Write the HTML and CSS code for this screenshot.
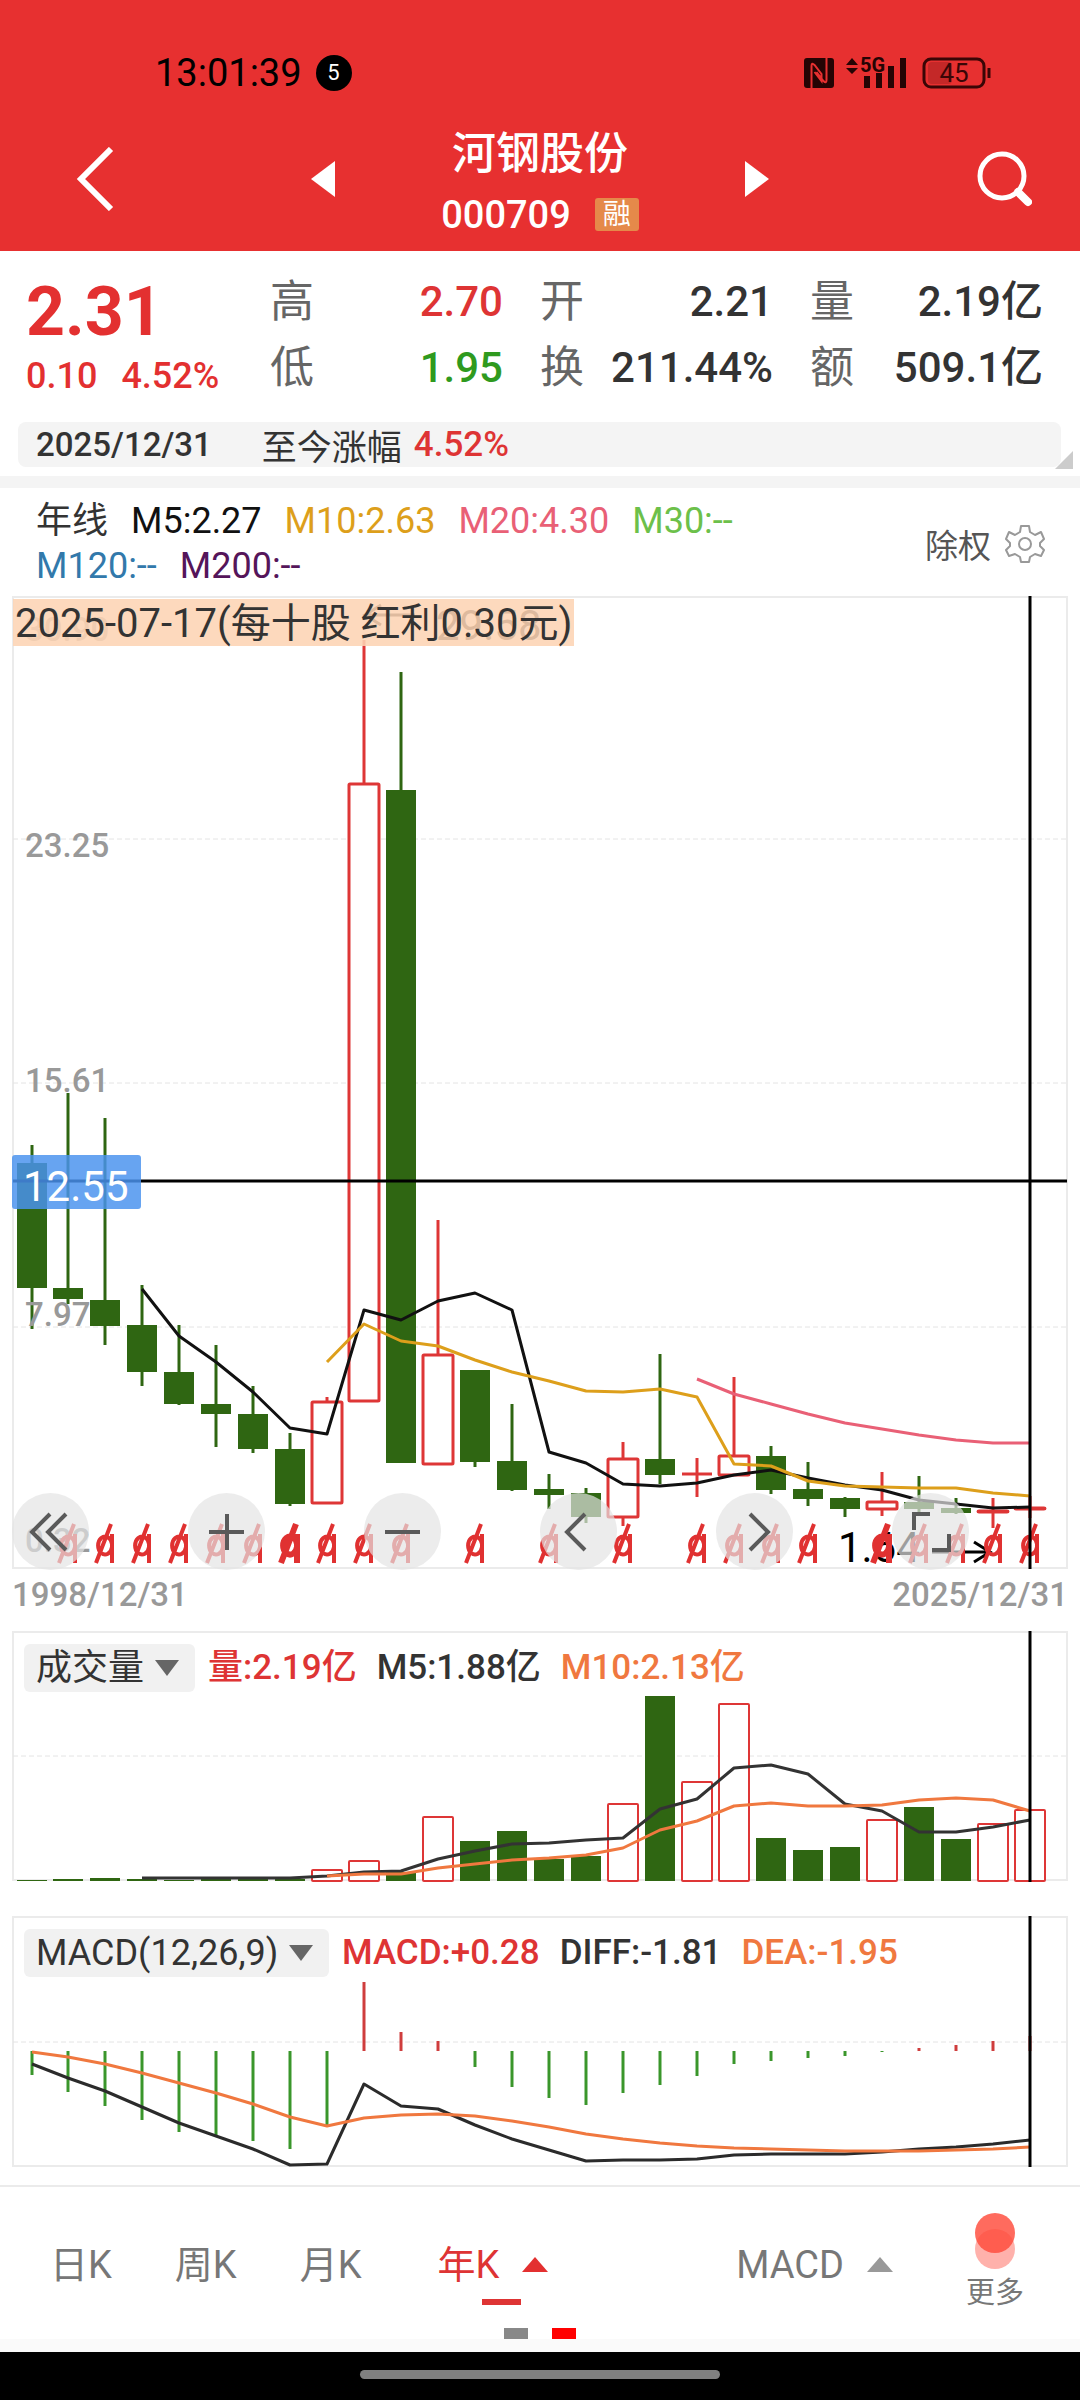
FILE: index.html
```html
<!DOCTYPE html>
<html lang="zh-CN">

<head>
    <meta charset="UTF-8">
    <meta name="viewport" content="width=device-width, initial-scale=1.0">
    <title>河钢股份 000709</title>
    <link rel="stylesheet" href="styles.css">
</head>

<body>
    <header class="top">
        <div class="status-bar">
            <div class="status-left">
                <span class="clock">13:01:39</span>
                <span class="notice">5</span>
            </div>
            <svg class="status-icons" width="188" height="36" viewBox="0 0 188 36">
                <rect x="1" y="3" width="30" height="30" rx="3" fill="#250404" />
                <path d="M8.500 33V11q0-4 3-1l7 9v7l-7-9M23.500 3v22q0 4-3 1l-7-9" fill="none" stroke="#e73030" stroke-width="2" />
                <path d="M43 10l6-7 6 7zM43 13h12l-6 6z" fill="#250404" />
                <text class="net" x="57" y="17">5G</text>
                <path d="M61 21h6v12h-6zM73 18h6v15h-6zM85 11h6v22h-6zM97 3h6v30h-6z" fill="#250404" />
                <rect x="125" y="7" width="24" height="22" rx="4" fill="#c42828" />
                <rect x="121" y="4" width="60" height="28" rx="7" fill="none" stroke="#3a0606" stroke-width="3" />
                <path d="M186 13v10" stroke="#3a0606" stroke-width="3" />
                <text class="battery" x="151" y="27">45</text>
            </svg>
        </div>
        <nav class="title-bar">
            <button class="icon-btn back" type="button" aria-label="返回">
                <svg width="38" height="64" viewBox="0 0 38 64"><path d="M35 2L5 32l30 30" fill="none" stroke="#fff" stroke-width="6" /></svg>
            </button>
            <div class="stock">
                <button class="icon-btn" type="button" aria-label="上一只">
                    <svg width="24" height="36" viewBox="0 0 24 36"><path d="M24 0v36L0 18z" fill="#fff" /></svg>
                </button>
                <div class="stock-name">
                    <h1>河钢股份</h1>
                    <p><span>000709</span><span class="tag">融</span></p>
                </div>
                <button class="icon-btn" type="button" aria-label="下一只">
                    <svg width="24" height="36" viewBox="0 0 24 36"><path d="M0 0v36l24-18z" fill="#fff" /></svg>
                </button>
            </div>
            <button class="icon-btn search" type="button" aria-label="搜索">
                <svg width="56" height="56" viewBox="0 0 56 56">
                    <circle cx="26" cy="25" r="22" fill="none" stroke="#fff" stroke-width="5" />
                    <path d="M42 41l10 10" stroke="#fff" stroke-width="8" stroke-linecap="round" />
                </svg>
            </button>
        </nav>
    </header>

    <section class="quote">
        <div class="price">
            <strong>2.31</strong>
            <p><span>0.10</span><span>4.52%</span></p>
        </div>
        <dl class="stats">
            <div><dt>高</dt><dd class="up">2.70</dd></div>
            <div><dt>开</dt><dd>2.21</dd></div>
            <div><dt>量</dt><dd>2.19亿</dd></div>
            <div><dt>低</dt><dd class="down">1.95</dd></div>
            <div><dt>换</dt><dd>211.44%</dd></div>
            <div><dt>额</dt><dd>509.1亿</dd></div>
        </dl>
    </section>

    <div class="strip">
        <span class="strip-date">2025/12/31</span>
        <span class="strip-label">至今涨幅</span>
        <span class="strip-value">4.52%</span>
    </div>

    <div class="legend-row">
        <div class="legend">
            <span>年线</span>
            <span class="c-m5">M5:2.27</span>
            <span class="c-m10">M10:2.63</span>
            <span class="c-m20">M20:4.30</span>
            <span class="c-m30">M30:--</span>
            <span class="c-m120">M120:--</span>
            <span class="c-m200">M200:--</span>
        </div>
        <button class="adjust" type="button">除权
            <svg width="40" height="40" viewBox="0 0 40 40" fill="none" stroke="#999" stroke-width="2">
                <path stroke-linejoin="round" d="M16 2h8l1 6 5 3 6-3 3 7-4 4v3l4 4-3 6-6-2-5 3-1 5h-8l-1-5-5-3-6 2-3-6 4-4v-3l-4-4 3-7 6 3 5-3z" />
                <circle cx="20" cy="20" r="6" />
            </svg>
        </button>
    </div>

    <main class="charts">
        <section class="panel">
            <svg id="kline" viewBox="12 596 1056 973"></svg>
            <p class="dividend">2025-07-17(每十股 红利0.30元)</p>
            <div class="tools">
                <button type="button" aria-label="最早"><svg viewBox="0 0 77 77"><path d="M38 21L20 39l18 18M54 21L36 39l18 18" /></svg></button>
                <button type="button" aria-label="放大"><svg viewBox="0 0 77 77"><path d="M21 39h35M39 21v36" /></svg></button>
                <button type="button" aria-label="缩小"><svg viewBox="0 0 77 77"><path d="M21 39h35" /></svg></button>
                <button type="button" aria-label="左移"><svg viewBox="0 0 77 77"><path d="M45 21L27 39l18 18" /></svg></button>
                <button type="button" aria-label="右移"><svg viewBox="0 0 77 77"><path d="M34 21l18 18-18 18" /></svg></button>
                <button type="button" aria-label="全屏"><svg viewBox="0 0 77 77"><path d="M22 37V21h16M40 57h17V41" /></svg></button>
            </div>
        </section>
        <div class="dates"><span>1998/12/31</span><span>2025/12/31</span></div>

        <section class="panel">
            <svg id="volume" viewBox="12 1631 1056 251"></svg>
            <div class="panel-head">
                <label class="picker"><select aria-label="指标"><option>成交量</option></select></label>
                <span class="up">量:2.19亿</span>
                <span>M5:1.88亿</span>
                <span class="c-orange">M10:2.13亿</span>
            </div>
        </section>

        <section class="panel">
            <svg id="macd" viewBox="12 1916 1056 251"></svg>
            <div class="panel-head">
                <label class="picker"><select aria-label="指标"><option>MACD(12,26,9)</option></select></label>
                <span class="up">MACD:+0.28</span>
                <span>DIFF:-1.81</span>
                <span class="c-orange">DEA:-1.95</span>
            </div>
        </section>
    </main>

    <footer class="bottom">
        <nav class="tabs">
            <button type="button">日K</button>
            <button type="button">周K</button>
            <button type="button">月K</button>
            <button class="active" type="button">年K<i class="caret"></i></button>
            <button class="indicator" type="button">MACD<i class="caret"></i></button>
            <button class="more" type="button">
                <svg width="40" height="56" viewBox="0 0 40 56">
                    <circle cx="20" cy="36" r="20" fill="#ff5244" fill-opacity=".45" />
                    <circle cx="20" cy="20" r="20" fill="#ff4a3a" fill-opacity=".82" />
                </svg>
                更多
            </button>
        </nav>
        <div class="pages"><i></i><i class="on"></i></div>
    </footer>
    <div class="home-bar"><i></i></div>

    <script src="charts.js"></script>
</body>

</html>
```
FILE: styles.css
```css
* {
    box-sizing: border-box;
}

body {
    margin: 0;
    background-color: #fff;
    color: #333;
    font-family: Roboto, "Noto Sans CJK SC", sans-serif;
}

h1, p, dl, dd {
    margin: 0;
}

button, select {
    margin: 0;
    padding: 0;
    border: none;
    background: none;
    color: inherit;
    font: inherit;
}

svg {
    display: block;
}

/* header */
.top {
    background-color: #e73030;
    color: #fff;
    padding-top: 48px;
}

.status-bar {
    display: flex;
    align-items: center;
    justify-content: space-between;
    height: 50px;
    padding: 0 89px 0 155px;
}

.status-left {
    display: flex;
    align-items: center;
    gap: 14px;
    color: #000;
}

.clock {
    font-size: 38px;
}

.notice {
    width: 36px;
    height: 36px;
    border-radius: 50%;
    background-color: #000;
    color: #fff;
    font-size: 22px;
    line-height: 36px;
    text-align: center;
}

.net {
    fill: #250404;
    font-size: 20px;
    font-weight: 700;
}

.battery {
    fill: #3a0606;
    font-size: 26px;
    text-anchor: middle;
}

.title-bar {
    display: grid;
    grid-template-columns: 1fr 458px 1fr;
    align-items: center;
    height: 153px;
    padding-top: 8px;
}

.icon-btn {
    display: flex;
}

.back {
    justify-self: start;
    margin-left: 76px;
}

.search {
    justify-self: end;
    margin-right: 48px;
}

.stock {
    display: flex;
    align-items: center;
    justify-content: space-between;
}

.stock-name {
    padding-top: 10px;
    text-align: center;
}

.stock-name h1 {
    font-size: 44px;
    font-weight: 500;
    line-height: 62px;
}

.stock-name p {
    display: flex;
    align-items: center;
    gap: 24px;
    font-size: 38px;
    font-weight: 500;
    line-height: 60px;
}

.tag {
    padding: 0 8px;
    border-radius: 3px;
    background-color: #e5894a;
    font-size: 28px;
    font-weight: 400;
    line-height: 33px;
}

/* quote */
.quote {
    display: flex;
    align-items: center;
    padding: 18px 37px 21px 26px;
}

.price {
    width: 244px;
    padding-top: 4px;
    color: #e33030;
    font-weight: 500;
}

.price strong {
    display: block;
    font-size: 68px;
    line-height: 78px;
}

.price p {
    display: flex;
    gap: 24px;
    font-size: 36px;
    line-height: 50px;
}

.stats {
    flex: 1;
    display: grid;
    grid-template-columns: repeat(3, 1fr);
    column-gap: 37px;
    line-height: 66px;
}

.stats div {
    display: flex;
    justify-content: space-between;
}

.stats dt {
    color: #666;
    font-size: 44px;
}

.stats dd {
    font-size: 42px;
    font-weight: 500;
}

.up, .stats .up {
    color: #de3434;
}

.stats .down {
    color: #2f9a1e;
}

.strip {
    position: relative;
    display: flex;
    align-items: center;
    height: 45px;
    margin: 0 19px 9px 18px;
    padding-left: 18px;
    border-radius: 8px;
    background-color: #f4f4f4;
    font-size: 35px;
}

.strip::after {
    content: "";
    position: absolute;
    right: -12px;
    bottom: -2px;
    border-left: 18px solid transparent;
    border-bottom: 18px solid #ccc;
}

.strip-date {
    margin-right: 50px;
    font-size: 33px;
    font-weight: 500;
}

.strip-label {
    margin-right: 12px;
}

.strip-value {
    color: #de3434;
    font-weight: 500;
}

/* moving averages */
.legend-row {
    display: flex;
    align-items: center;
    border-top: 12px solid #f4f4f4;
    padding: 11px 35px 7px 36px;
}

.legend {
    flex: 1;
    display: flex;
    flex-wrap: wrap;
    column-gap: 23px;
    font-size: 36px;
    line-height: 45px;
}

.adjust {
    display: flex;
    align-items: center;
    gap: 14px;
    margin-left: 70px;
    color: #555;
    font-size: 33px;
}

.c-m5 { color: #111; }
.c-m10 { color: #dd9f1b; }
.c-m20 { color: #e96076; }
.c-m30 { color: #6cc04a; }
.c-m120 { color: #3279ab; }
.c-m200 { color: #55155a; }
.c-orange { color: #f0783f; }

/* charts */
.charts {
    padding: 0 12px 18px;
}

.panel {
    position: relative;
}

.panel + .panel {
    margin-top: 34px;
}

.panel > svg {
    width: 100%;
    height: auto;
}

.dividend {
    position: absolute;
    top: 3px;
    left: 1px;
    padding: 2px 2px 0;
    background-color: rgba(253, 212, 180, 0.88);
    font-size: 40px;
    line-height: 45px;
    white-space: nowrap;
}

.tools {
    position: absolute;
    left: 0;
    bottom: -1px;
    display: flex;
    gap: 99px;
}

.tools button {
    width: 77px;
    height: 77px;
    border-radius: 50%;
    background-color: rgba(227, 227, 227, 0.69);
}

.tools svg {
    fill: none;
    stroke: #5a5a5a;
    stroke-width: 4;
}

.dates {
    display: flex;
    justify-content: space-between;
    margin-bottom: 10px;
    color: #999;
    font-size: 33px;
    font-weight: 500;
    line-height: 52px;
}

.panel-head {
    position: absolute;
    top: 13px;
    left: 12px;
    display: flex;
    align-items: center;
    gap: 20px;
    font-size: 35px;
    font-weight: 500;
    line-height: 48px;
}

.picker {
    position: relative;
    margin-right: -7px;
    border-radius: 6px;
    background-color: #f1f1f1;
    font-weight: 400;
}

.picker select {
    appearance: none;
    display: block;
    height: 48px;
    padding: 0 50px 0 12px;
    font-size: 36px;
}

.picker::after {
    content: "";
    position: absolute;
    top: 16px;
    right: 16px;
    border: 12px solid transparent;
    border-top: 16px solid #666;
    border-bottom: none;
    pointer-events: none;
}

.axis {
    fill: #999;
    font-size: 33px;
    font-weight: 500;
}

.mark {
    font-size: 42px;
}

.cursor-price {
    fill: #fff;
    font-size: 42px;
}

.frame {
    fill: none;
    stroke: #ebebeb;
    stroke-width: 2;
}

.grid {
    stroke: #e4e4e4;
    stroke-width: 1;
    stroke-dasharray: 5 3;
}

.cursor {
    stroke: #000;
    stroke-width: 3;
}

/* footer */
.bottom {
    border-top: 2px solid #ebebeb;
    border-bottom: 13px solid #fafafa;
}

.tabs {
    display: flex;
    align-items: center;
    height: 141px;
    padding: 14px 56px 0 50px;
    color: #777;
    font-size: 38px;
}

.tabs button {
    display: flex;
    align-items: center;
    margin-right: 63px;
    line-height: 80px;
}

.caret {
    margin-left: 23px;
    border: 13px solid transparent;
    border-top: none;
    border-bottom: 15px solid #999;
}

.tabs .active {
    position: relative;
    margin-left: 13px;
    color: #de3434;
}

.active .caret {
    border-bottom-color: #e33030;
}

.active::after {
    content: "";
    position: absolute;
    bottom: 0;
    left: 50%;
    width: 39px;
    height: 6px;
    margin-left: -11px;
    background-color: #de3434;
}

.tabs .indicator {
    margin-left: auto;
    margin-right: 73px;
}

.tabs .more {
    flex-direction: column;
    margin-right: 0;
    font-size: 29px;
    line-height: 48px;
}

.pages {
    display: flex;
    justify-content: center;
    gap: 24px;
}

.pages i {
    width: 24px;
    height: 11px;
    background-color: #888;
}

.pages .on {
    background-color: #f00;
}

.home-bar {
    padding: 18px 0 21px;
    background-color: #000;
}

.home-bar i {
    display: block;
    width: 33.3%;
    height: 9px;
    margin: 0 auto;
    border-radius: 5px;
    background-color: #808080;
}
```
FILE: charts.js
```js
const RED = '#de3636';
const GREEN = '#2f6612';
const cx = i => i === 0 ? 32 : 31 + 37 * i;

// high, body top, body bottom, low, 1 = rising year
const candles = [
    [1145, 1163, 1288, 1329, 0], [1093, 1288, 1299, 1304, 0], [1118, 1300, 1326, 1345, 0], [1285, 1325, 1372, 1386, 0],
    [1325, 1372, 1404, 1405, 0], [1345, 1404, 1414, 1447, 0], [1386, 1414, 1449, 1453, 0], [1433, 1449, 1504, 1506, 0],
    [1397, 1402, 1503, 1503, 1], [640, 784, 1401, 1401, 1], [672, 790, 1463, 1463, 0], [1220, 1355, 1464, 1464, 1],
    [1370, 1370, 1462, 1467, 0], [1404, 1461, 1490, 1491, 0], [1474, 1489, 1495, 1509, 0], [1488, 1493, 1517, 1523, 0],
    [1442, 1459, 1517, 1526, 1], [1354, 1459, 1475, 1484, 0], [1458, 1474, 1474, 1497, 1], [1377, 1456, 1475, 1475, 1],
    [1446, 1456, 1490, 1494, 0], [1462, 1489, 1499, 1506, 0], [1497, 1498, 1509, 1517, 0], [1472, 1502, 1509, 1516, 1],
    [1476, 1502, 1509, 1513, 0], [1498, 1508, 1513, 1514, 0], [1498, 1511, 1512, 1528, 1], [1496, 1508, 1509, 1518, 1]
];
const ma5 = [1289, 1336, 1362, 1392, 1428, 1434, 1310, 1320, 1301, 1293, 1310, 1452, 1463, 1484, 1486, 1483, 1475, 1470, 1478, 1485, 1490, 1500, 1504, 1508, 1507];
const ma10 = [1362, 1324, 1341, 1346, 1360, 1372, 1381, 1391, 1392, 1389, 1397, 1464, 1466, 1481, 1486, 1487, 1488, 1488, 1493, 1496];
const ma20 = [1379, 1394, 1404, 1414, 1423, 1429, 1435, 1440, 1443, 1443];
const dividends = [1, 2, 3, 4, 5, 6, 7, 8, 9, 10, 12, 14, 16, 18, 19, 20, 21, 23, 24, 25, 26, 27];

const volTops = [1880, 1879, 1878, 1879, 1880, 1879, 1879, 1879, 1870, 1861, 1872, 1817, 1841, 1831, 1859, 1856, 1804, 1696, 1782, 1704, 1838, 1850, 1847, 1820, 1807, 1839, 1824, 1810];
const vol5 = [1878, 1878, 1878, 1878, 1878, 1876, 1872, 1871, 1859, 1851, 1844, 1843, 1840, 1838, 1809, 1799, 1768, 1765, 1774, 1804, 1811, 1832, 1832, 1827, 1820];
const vol10 = [1876, 1874, 1874, 1868, 1864, 1860, 1858, 1855, 1848, 1830, 1821, 1806, 1803, 1806, 1806, 1805, 1800, 1798, 1800, 1811];

const ZERO = 2051;
const macdEnds = [2075, 2092, 2106, 2120, 2132, 2136, 2141, 2149, 2125, 1982, 2032, 2041, 2067, 2087, 2098, 2105, 2093, 2085, 2076, 2064, 2061, 2058, 2056, 2052, 2048, 2045, 2041, 2036];
const diff = [2064, 2078, 2091, 2107, 2123, 2136, 2149, 2165, 2164, 2084, 2106, 2109, 2125, 2139, 2150, 2161, 2160, 2160, 2159, 2155, 2154, 2154, 2154, 2152, 2149, 2147, 2144, 2140];
const dea = [2052, 2057, 2064, 2073, 2083, 2093, 2104, 2117, 2126, 2118, 2115, 2114, 2116, 2121, 2127, 2134, 2139, 2143, 2146, 2148, 2149, 2150, 2151, 2151, 2151, 2150, 2149, 2147];

function line(values, start, color) {
    const points = values.map((y, i) => cx(i + start) + ',' + y).join(' ');
    return `<polyline points="${points}" fill="none" stroke="${color}" stroke-width="3" stroke-linejoin="round"/>`;
}

function bar(i, top, bottom, up, stroke) {
    const x = cx(i);
    if (up) {
        return `<rect x="${x - 15}" y="${top}" width="30" height="${bottom - top}" rx="1" fill="#fff" stroke="${RED}" stroke-width="${stroke}"/>`;
    }
    return `<rect x="${x - 15}" y="${top}" width="30" height="${bottom - top}" fill="${GREEN}"/>`;
}

function frame(top, bottom, grids) {
    return `<rect class="frame" x="13" y="${top}" width="1054" height="${bottom - top}"/>` +
        grids.map(y => `<line class="grid" x1="13" x2="1067" y1="${y}" y2="${y}"/>`).join('');
}

function cursor(top, bottom) {
    return `<line class="cursor" x1="1030" x2="1030" y1="${top}" y2="${bottom}"/>`;
}

function drawKline() {
    let out = frame(597, 1568, [839, 1083, 1327]);
    candles.forEach(([high, top, bottom, low, up], i) => {
        out += `<line x1="${cx(i)}" x2="${cx(i)}" y1="${high}" y2="${low}" stroke="${up ? RED : GREEN}" stroke-width="3"/>`;
        // a flat year is drawn as a plain cross
        out += top === bottom
            ? `<line x1="${cx(i) - 15}" x2="${cx(i) + 15}" y1="${top}" y2="${top}" stroke="${RED}" stroke-width="3"/>`
            : bar(i, top, bottom, up, 3);
    });
    [['30.90', 641], ['23.25', 857], ['15.61', 1092], ['7.97', 1326], ['0.32', 1552]].forEach(([label, y]) => {
        out += `<text class="axis" x="25" y="${y}">${label}</text>`;
    });
    out += line(ma5, 3, '#111') + line(ma10, 8, '#dd9f1b') + line(ma20, 18, '#e96076');
    out += '<path d="M415 615h-50m16-10l-16 10 16 10" fill="none" stroke="#000" stroke-width="3"/><text class="mark" x="436" y="640">29.58</text>';
    out += '<text class="mark" x="838" y="1562">1.64</text><path d="M932 1552h58m-16-10l16 10-16 10" fill="none" stroke="#000" stroke-width="3"/>';
    dividends.forEach(i => {
        const x = cx(i);
        const width = i === 7 || i === 23 ? 6 : 4;
        out += `<path d="M${x + 7} 1534v29M${x + 7} 1544a7 9 0 1 0 0 3M${x - 9} 1563l15-39" fill="none" stroke="#e03131" stroke-width="${width}"/>`;
    });
    out += '<line class="cursor" x1="13" x2="1067" y1="1181" y2="1181"/>' + cursor(596, 1569);
    out += '<rect x="12" y="1155" width="129" height="54" rx="3" fill="#4a93ee" fill-opacity=".84"/>';
    out += '<text class="cursor-price" x="23" y="1201">12.55</text>';
    document.getElementById('kline').innerHTML = out;
}

function drawVolume() {
    let out = frame(1632, 1880, [1756]);
    volTops.forEach((top, i) => {
        out += bar(i, top, 1881, candles[i][4], 2);
    });
    out += line(vol5, 3, '#333') + line(vol10, 8, '#f0783f') + cursor(1631, 1882);
    document.getElementById('volume').innerHTML = out;
}

function drawMacd() {
    let out = frame(1917, 2166, [2042]);
    macdEnds.forEach((y, i) => {
        out += `<line x1="${cx(i)}" x2="${cx(i)}" y1="${ZERO}" y2="${y}" stroke="${y < ZERO ? '#cf3d3d' : '#3a962b'}" stroke-width="3"/>`;
    });
    out += line(diff, 0, '#2b2b2b') + line(dea, 0, '#f0783f') + cursor(1916, 2167);
    document.getElementById('macd').innerHTML = out;
}

drawKline();
drawVolume();
drawMacd();
```
